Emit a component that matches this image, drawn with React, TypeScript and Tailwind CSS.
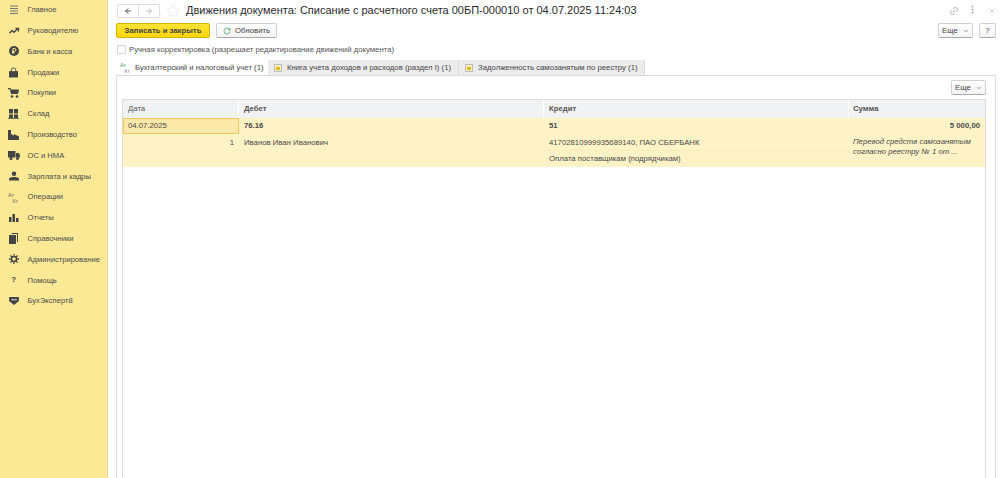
import type { ReactNode } from "react";
import { ArrowLeft, ArrowRight, ChevronDown, Link2, RotateCw, Star, X } from "lucide-react";

const dtkt = (
	<svg width="11" height="11" viewBox="0 0 11 11">
		<text x="0" y="5" fontSize="5.500" fontFamily="Liberation Sans" fill="#666">Ат</text>
		<text x="4.500" y="10.500" fontSize="5" fontFamily="Liberation Sans" fill="#666">Кт</text>
	</svg>
);

const tabDtkt = (
	<svg width="11" height="11" viewBox="0 0 11 11">
		<text x="0" y="5" fontSize="5.500" fontFamily="Liberation Sans" fill="#4b9a5a">Ат</text>
		<text x="4.500" y="10.500" fontSize="5" fontFamily="Liberation Sans" fill="#777">Кт</text>
	</svg>
);

const menu: { label: string; icon: ReactNode }[] = [
	{
		label: "Главное",
		icon: (
			<svg width="10" height="9" viewBox="0 0 10 9" stroke="#777" strokeWidth="1">
				<path d="M1 1h8M1 3.500h8M1 6h8M1 8.500h8" />
			</svg>
		),
	},
	{
		label: "Руководителю",
		icon: (
			<svg width="12" height="8" viewBox="0 0 12 9" fill="none" stroke="#444" strokeWidth="1.500">
				<path d="M1 7l3-3 2 2 4-4M7.500 1.500H11V5" />
			</svg>
		),
	},
	{
		label: "Банк и касса",
		icon: (
			<svg width="10" height="10" viewBox="0 0 10 10">
				<circle cx="5" cy="5" r="5" fill="#444" />
				<path d="M4 8V2.500h1.500a1.400 1.400 0 0 1 0 2.800H3M3 6.500h2.500" fill="none" stroke="#fbe995" />
			</svg>
		),
	},
	{
		label: "Продажи",
		icon: (
			<svg width="9" height="11" viewBox="0 0 10 11">
				<path d="M0 4h10v7H0z" fill="#444" />
				<path d="M2.500 5V2.500a2.500 2 0 0 1 5 0V5" fill="none" stroke="#444" />
			</svg>
		),
	},
	{
		label: "Покупки",
		icon: (
			<svg width="11" height="10" viewBox="0 0 11 10" fill="#444">
				<path d="M0 0h2.500l.5 1.500h8L10 6H3L1.800 1.200H0z" />
				<circle cx="4" cy="8.500" r="1.300" />
				<circle cx="9" cy="8.500" r="1.300" />
			</svg>
		),
	},
	{
		label: "Склад",
		icon: (
			<svg width="11" height="10" viewBox="0 0 11 10" fill="#444">
				<path d="M1 0h4v4.500H1zM6 0h4v4.500H6zM1 5.500h4V9H1zM6 5.500h4V9H6zM0 9.300h11v.7H0z" />
			</svg>
		),
	},
	{
		label: "Производство",
		icon: (
			<svg width="11" height="10" viewBox="0 0 11 10" fill="#444">
				<path d="M0 0h3v4l3 1.500V4l5 2.500V10H0z" />
			</svg>
		),
	},
	{
		label: "ОС и НМА",
		icon: (
			<svg width="12" height="9" viewBox="0 0 12 9" fill="#444">
				<path d="M0 0h7.500v6.500H0zM8 2h2.500L12 4v2.500H8z" />
				<circle cx="3" cy="7.500" r="1.500" />
				<circle cx="9.500" cy="7.500" r="1.500" />
			</svg>
		),
	},
	{
		label: "Зарплата и кадры",
		icon: (
			<svg width="10" height="10" viewBox="0 0 11 10" fill="#444">
				<circle cx="5.500" cy="2.500" r="2.500" />
				<path d="M0 7.500l3.500-1.500h4L11 7.500V10H0z" />
			</svg>
		),
	},
	{ label: "Операции", icon: dtkt },
	{
		label: "Отчеты",
		icon: (
			<svg width="10" height="9" viewBox="0 0 10 9" fill="#444">
				<path d="M0 4h2.500v5H0zM3.500 1H6v8H3.500zM7 5h2.500v4H7z" />
			</svg>
		),
	},
	{
		label: "Справочники",
		icon: (
			<svg width="9" height="11" viewBox="0 0 9 11" fill="#444">
				<path d="M2.500 0H9v9H8V1H2.500z" />
				<path d="M0 2h7v9H0z" />
			</svg>
		),
	},
	{
		label: "Администрирование",
		icon: (
			<svg width="10" height="10" viewBox="0 0 11 11" fill="none" stroke="#444">
				<circle cx="5.500" cy="5.500" r="2.800" strokeWidth="1.600" />
				<path d="M5.500 0v2M5.500 9v2M0 5.500h2M9 5.500h2M1.600 1.600L3 3M8 8l1.400 1.400M1.600 9.400L3 8M8 3l1.400-1.400" strokeWidth="1.400" />
			</svg>
		),
	},
	{ label: "Помощь", icon: <span className="text-[8px] font-bold leading-none text-[#444]">?</span> },
	{
		label: "БухЭксперт8",
		icon: (
			<svg width="10" height="8" viewBox="0 0 11 9">
				<path d="M0 0h11v4.500L5.500 9 0 4.500z" fill="#444" />
				<path d="M2.500 2.500h6v1.200h-6z" fill="#cfd8e0" />
			</svg>
		),
	},
];

const Btn = ({ children, className = "" }: { children: ReactNode; className?: string }) => (
	<div
		className={`flex h-[15px] items-center justify-center rounded-[2px] border border-[#d0d0d0] border-b-[#aaa] bg-gradient-to-b from-white to-[#f3f3f3] text-[#444] ${className}`}
	>
		{children}
	</div>
);

const More = () => (
	<Btn className="w-[35px] gap-[5px]">
		<span>Еще</span>
		<ChevronDown size={6} strokeWidth={3} className="text-[#777]" />
	</Btn>
);

const Tab = ({ label, width }: { label: string; width: string }) => (
	<div className={`flex h-[15px] shrink-0 items-center gap-[5px] whitespace-nowrap border-r border-[#dcdcdc] bg-[#ececec] pl-[6px] ${width}`}>
		<svg width="8" height="8" viewBox="0 0 8 8" className="shrink-0">
			<rect x="0.500" y="0.500" width="7" height="7" fill="#faf0b8" stroke="#bdbdbd" />
			<path d="M2 3h4v3H2z" fill="#e0b92a" />
		</svg>
		<span className="text-[#444]">{label}</span>
	</div>
);

const App = () => {
	return (
		<div className="flex h-[478px] w-[1000px] overflow-hidden bg-white font-['Liberation_Sans',sans-serif] text-[7.750px] text-[#4a4a4a]">
			<aside className="flex h-full w-[108px] shrink-0 flex-col border-r border-[#eadb93] bg-[#fbe995] text-[7.600px]">
				<div className="-mt-[0.500px]">
					{menu.map((item) => (
						<div key={item.label} className="flex h-[20.800px] items-center">
							<div className="flex w-[27.500px] shrink-0 justify-center">{item.icon}</div>
							<span className="whitespace-nowrap">{item.label}</span>
						</div>
					))}
				</div>
			</aside>

			<main className="flex min-w-0 flex-1 flex-col pl-[8px] pr-[4px]">
				<div className="flex h-[21px] items-center">
					<div className="ml-px flex h-[14px] w-[43px] items-center rounded-[2px] border border-[#dedede]">
						<div className="flex h-full w-[21px] items-center justify-center border-r border-[#e2e2e2]">
							<ArrowLeft size={8} strokeWidth={3} className="text-[#555]" />
						</div>
						<div className="flex h-full flex-1 items-center justify-center">
							<ArrowRight size={8} strokeWidth={3} className="text-[#bbb]" />
						</div>
					</div>
					<Star size={14} strokeWidth={1} className="ml-[6px] text-[#ddd]" />
					<h1 className="ml-[6px] whitespace-nowrap text-[11px] font-normal text-[#2a2a2a]">
						Движения документа: Списание с расчетного счета 00БП-000010 от 04.07.2025 11:24:03
					</h1>
					<div className="ml-auto flex items-center gap-[9px] pr-px">
						<Link2 size={10} className="-rotate-45 text-[#aaa]" />
						<span className="text-[9px] font-bold leading-none text-[#888]">⋮</span>
						<X size={6} className="ml-[3px] text-[#999]" />
					</div>
				</div>

				<div className="mt-[2px] flex h-[15px] items-center">
					<div className="flex h-[15px] w-[94px] items-center justify-center rounded-[2px] border border-[#d4b400] bg-gradient-to-b from-[#ffe433] to-[#fbd600] font-bold text-[#444]">
						Записать и закрыть
					</div>
					<Btn className="ml-[6px] w-[61px] gap-[4px]">
						<RotateCw size={8} strokeWidth={2} className="text-[#3d9a5a]" />
						<span>Обновить</span>
					</Btn>
					<div className="ml-auto flex gap-[6px]">
						<More />
						<Btn className="w-[17px]">?</Btn>
					</div>
				</div>

				<div className="mt-[4px] flex h-[15px] items-center gap-[3px] pl-px">
					<span className="h-[9px] w-[9px] rounded-[1px] border border-[#d5d5d5] bg-white" />
					<span className="text-[#555]">Ручная корректировка (разрешает редактирование движений документа)</span>
				</div>

				<div className="mt-[3px] flex items-center">
					<div className="flex h-[15px] w-[152px] shrink-0 items-center gap-[4px] whitespace-nowrap pl-[4px]">
						{tabDtkt}
						<span>Бухгалтерский и налоговый учет (1)</span>
					</div>
					<Tab label="Книга учета доходов и расходов (раздел I) (1)" width="w-[191px]" />
					<Tab label="Задолженность самозанятым по реестру (1)" width="w-[186px]" />
				</div>

				<div className="flex min-h-0 flex-1 flex-col border-x border-t border-[#dcdcdc] pl-[5px] pr-[9px]">
					<div className="flex h-[23px] shrink-0 items-start justify-end pt-[4px]">
						<More />
					</div>
					<div className="flex-1 border-x border-t border-[#dcdcdc]">
						<div className="grid h-[18px] grid-cols-[116px_305px_305px_1fr] items-center bg-[#f1f2f3] text-[#555]">
							<span className="flex h-full items-center border-r border-white pl-[5px]">Дата</span>
							<span className="flex h-full items-center border-r border-white pl-[5px] font-bold">Дебет</span>
							<span className="flex h-full items-center border-r border-white pl-[5px] font-bold">Кредит</span>
							<span className="pl-[4px] font-bold">Сумма</span>
						</div>
						<div className="grid grid-cols-[116px_305px_305px_1fr] bg-[#fdf3c6]">
							<div className="flex h-[16px] items-center border border-[#f0c95a] bg-[#fce8a8] pl-[4px]">04.07.2025</div>
							<div className="flex h-[16px] items-center pl-[5px] font-bold">76.16</div>
							<div className="flex h-[16px] items-center pl-[5px] font-bold">51</div>
							<div className="flex h-[16px] items-center justify-end pr-[5px] font-bold">5 000,00</div>

							<div className="flex h-[16px] items-center justify-end pr-[5px] pt-px">1</div>
							<div className="flex h-[16px] items-center pl-[5px] pt-px">Иванов Иван Иванович</div>
							<div className="flex h-[16px] items-center pl-[5px] pt-px">41702810999935689140, ПАО СБЕРБАНК</div>
							<div className="row-span-2 pl-[4px] pt-[3px] italic leading-[10px]">
								Перевод средств самозанятым
								<br />
								согласно реестру № 1 от ...
							</div>

							<div className="h-[17px]" />
							<div className="h-[17px]" />
							<div className="flex h-[17px] items-center border-t border-[#f8ebb4] pl-[5px]">Оплата поставщикам (подрядчикам)</div>
						</div>
					</div>
				</div>
			</main>
		</div>
	);
};

export default App;
